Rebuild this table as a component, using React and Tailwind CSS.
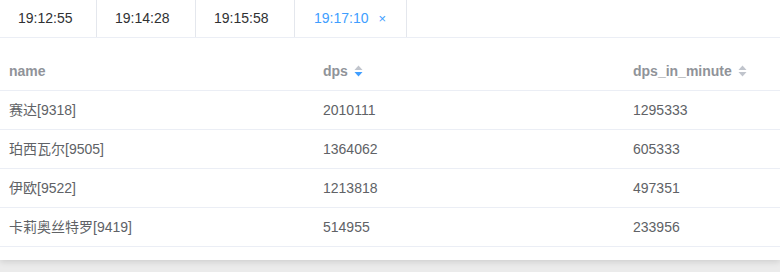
const tabs = [
  { label: "19:12:55", w: "w-[97px]" },
  { label: "19:14:28", w: "w-[99px]" },
  { label: "19:15:58", w: "w-[99px]" },
  { label: "19:17:10", w: "w-[112px]", active: true },
];

const rows = [
  { name: "赛达[9318]", dps: "2010111", minute: "1295333" },
  { name: "珀西瓦尔[9505]", dps: "1364062", minute: "605333" },
  { name: "伊欧[9522]", dps: "1213818", minute: "497351" },
  { name: "卡莉奥丝特罗[9419]", dps: "514955", minute: "233956" },
];

function SortCaret({ active }) {
  return (
    <span className="ml-[6px] inline-flex flex-col gap-[2px]">
      <svg width="9" height="5" viewBox="0 0 9 5">
        <path d="M0.5 5 L4.5 0.5 L8.5 5 Z" fill="#c0c4cc" />
      </svg>
      <svg width="9" height="5" viewBox="0 0 9 5">
        <path d="M0.5 0 L4.5 4.5 L8.5 0 Z" fill={active ? "#409eff" : "#c0c4cc"} />
      </svg>
    </span>
  );
}

export default function App() {
  return (
    <div className="h-[272px] w-[780px] bg-[#ebebeb] font-['Liberation_Sans','Noto_Sans_CJK_SC',sans-serif] text-[14px]">
      <div className="bg-white pb-[13px] shadow-[0_2px_6px_rgba(0,0,0,0.12)]">
        <div className="flex h-[38px] border-b border-[#ebeef5]">
          {tabs.map((t) => (
            <div
              key={t.label}
              className={`${t.w} flex items-center border-r border-[#e4e7ed] pl-[18px] ${
                t.active ? "pl-[19px] text-[#409eff]" : "text-[#303133]"
              }`}
            >
              {t.label}
              {t.active && <span className="ml-[10px] text-[13px] text-[#409eff]">×</span>}
            </div>
          ))}
        </div>
        <div className="mt-[14px]">
          <div className="grid h-[39px] grid-cols-[313px_310px_1fr] items-center border-b border-[#ebeef5] font-bold text-[#909399]">
            <div className="pl-[9px]">name</div>
            <div className="flex items-center pl-[10px]">
              dps
              <SortCaret active />
            </div>
            <div className="flex items-center pl-[10px]">
              dps_in_minute
              <SortCaret />
            </div>
          </div>
          {rows.map((r) => (
            <div
              key={r.name}
              className="grid h-[39px] grid-cols-[313px_310px_1fr] items-center border-b border-[#ebeef5] text-[#606266]"
            >
              <div className="pl-[9px]">{r.name}</div>
              <div className="pl-[10px]">{r.dps}</div>
              <div className="pl-[10px]">{r.minute}</div>
            </div>
          ))}
        </div>
      </div>
    </div>
  );
}
